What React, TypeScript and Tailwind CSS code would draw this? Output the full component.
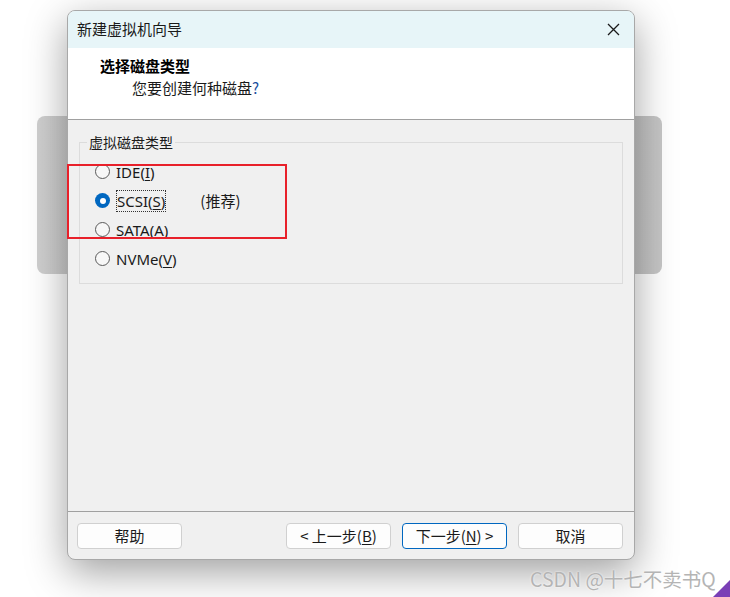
import React from "react";

const FONT = { fontFamily: '"Noto Sans", "Noto Sans CJK SC", sans-serif' };
const CJK = { fontFamily: '"Noto Sans CJK SC", "Noto Sans", sans-serif' };

function Radio({ checked }: { checked?: boolean }) {
  if (checked) {
    return (
      <span className="flex h-[15px] w-[15px] shrink-0 items-center justify-center rounded-full bg-[#0067c0]">
        <span className="h-[6px] w-[6px] rounded-full bg-white" />
      </span>
    );
  }
  return <span className="h-[15px] w-[15px] shrink-0 rounded-full border border-[#5a5a5a] bg-[#f7f7f7]" />;
}

function Btn({ children, primary }: { children: React.ReactNode; primary?: boolean }) {
  return (
    <div
      className={
        "flex h-[26px] w-[105px] items-center justify-center rounded-[4px] bg-[#fdfdfd] text-[15px] text-[#1a1a1a] " +
        (primary ? "border border-[#0067c0]" : "border border-[#d0d0d0]")
      }
      style={CJK}
    >
      {children}
    </div>
  );
}

export default function App() {
  return (
    <div className="relative h-[597px] w-[730px] overflow-hidden bg-white" style={FONT}>
      {/* background window */}
      <div className="absolute left-[37px] top-[116px] h-[158px] w-[625px] rounded-[8px] bg-gradient-to-r from-[#cfcfcf] to-[#c6c6c6]" />

      <div className="relative pl-[67px] pt-[10px]">
        <div className="flex h-[550px] w-[568px] flex-col overflow-hidden rounded-[8px] border border-[#a8a8a8] bg-[#f0f0f0] shadow-[0_12px_40px_rgba(0,0,0,0.38)]">
          {/* title bar */}
          <div className="flex h-[37px] shrink-0 items-center justify-between bg-[#e7f5f8] pl-[9px] pr-[14px]">
            <span className="text-[15px] text-[#1a1a1a]" style={CJK}>新建虚拟机向导</span>
            <svg width="13" height="13" viewBox="0 0 13 13">
              <path d="M1 1 L12 12 M12 1 L1 12" stroke="#1a1a1a" strokeWidth="1.3" fill="none" />
            </svg>
          </div>
          {/* header */}
          <div className="h-[72px] shrink-0 border-b border-[#a0a0a0] bg-white pl-[32px] pt-[8px]" style={CJK}>
            <div className="text-[15px] font-bold leading-[20px] text-black">选择磁盘类型</div>
            <div className="pl-[32px] pt-[1px] text-[15px] leading-[22px] text-[#1a1a1a]">
              您要创建何种磁盘<span className="text-[#1a4fa0]">?</span>
            </div>
          </div>
          {/* body */}
          <div className="flex flex-1 flex-col px-[11px] pt-[22px]">
            <div className="relative h-[142px] border border-[#dcdcdc]">
              <span
                className="absolute -top-[11px] left-[7px] bg-[#f0f0f0] px-[2px] text-[14px] leading-[20px] text-[#1a1a1a]"
                style={CJK}
              >
                虚拟磁盘类型
              </span>
              <div className="flex flex-col pl-[15px] pt-[14px] text-[15px] leading-[20px] text-[#1a1a1a]">
                <div className="flex h-[29px] items-center gap-[6px]">
                  <Radio />
                  <span>IDE(<span className="underline underline-offset-2">I</span>)</span>
                </div>
                <div className="flex h-[29px] items-center gap-[6px]">
                  <Radio checked />
                  <span className="border border-dotted border-[#333] px-[0px]">
                    SCSI(<span className="underline underline-offset-2">S</span>)
                  </span>
                  <span className="pl-[28px]" style={CJK}>(推荐)</span>
                </div>
                <div className="flex h-[29px] items-center gap-[6px]">
                  <Radio />
                  <span>SATA(A)</span>
                </div>
                <div className="flex h-[29px] items-center gap-[6px]">
                  <Radio />
                  <span>NVMe(<span className="underline underline-offset-2">V</span>)</span>
                </div>
              </div>
            </div>
          </div>
          {/* footer */}
          <div className="flex h-[48px] shrink-0 items-start justify-between border-t border-[#a0a0a0] pl-[9px] pr-[11px] pt-[11px]">
            <Btn>帮助</Btn>
            <div className="flex gap-[11px]">
              <Btn>&lt; 上一步(<span className="underline underline-offset-2">B</span>)</Btn>
              <Btn primary>下一步(<span className="underline underline-offset-2">N</span>) &gt;</Btn>
              <Btn>取消</Btn>
            </div>
          </div>
        </div>
      </div>

      {/* red highlight */}
      <div className="absolute left-[67px] top-[164px] h-[75px] w-[220px] border-2 border-[#e8202a]" />

      {/* watermark */}
      <div
        className="absolute left-[530px] top-[566px] text-[19.5px] leading-[26px] text-[#b4b4b4] [text-shadow:0_0_2px_#ffffff]"
        style={CJK}
      >
        CSDN @十七不卖书Q
      </div>
      <svg className="absolute bottom-0 right-0" width="17" height="17" viewBox="0 0 17 17">
        <path d="M17 0 L17 17 L0 17 Z" fill="#7a3fb6" />
      </svg>
    </div>
  );
}
